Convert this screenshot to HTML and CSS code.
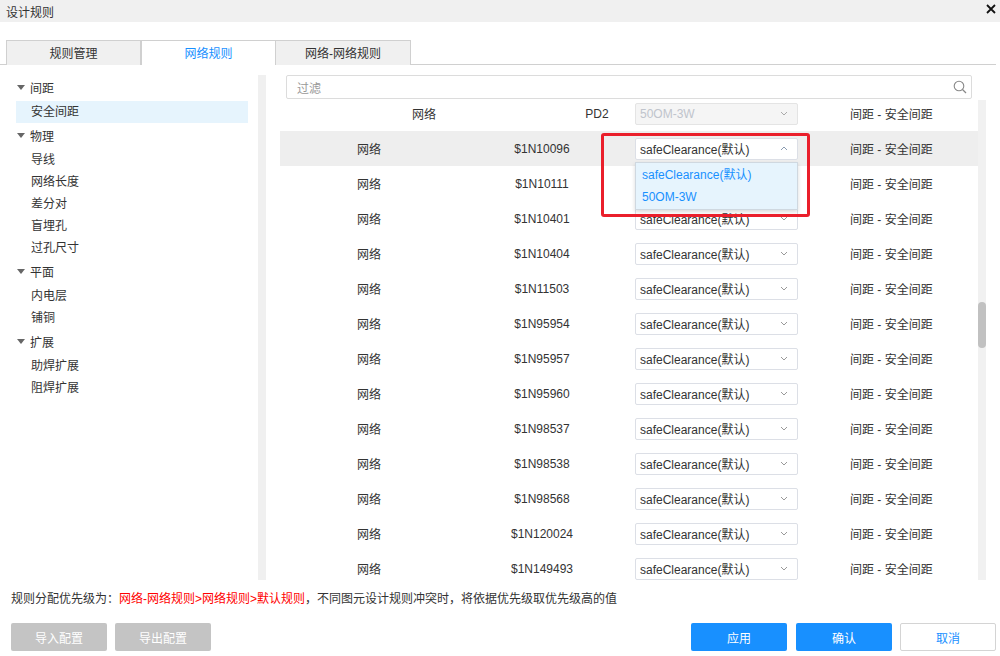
FILE: index.html
```html
<!DOCTYPE html>
<html lang="zh">
<head>
<meta charset="utf-8">
<title>设计规则</title>
<link rel="stylesheet" href="styles.css">
</head>
<body>
<div class="dialog">
  <div class="titlebar">
    <span class="title">设计规则</span>
    <svg class="close" width="10" height="10" viewBox="0 0 10 10"><path d="M1 1 L9 9 M9 1 L1 9" stroke="#111" stroke-width="1.8"/></svg>
  </div>
  <div class="tabs">
    <div class="tab">规则管理</div>
    <div class="tab active">网络规则</div>
    <div class="tab">网络-网络规则</div>
  </div>
  <div class="main">
    <div class="tree">
      <div class="cat"><span class="tri"></span>间距</div>
      <div class="children">
        <div class="item selected">安全间距</div>
      </div>
      <div class="cat"><span class="tri"></span>物理</div>
      <div class="children">
        <div class="item">导线</div>
        <div class="item">网络长度</div>
        <div class="item">差分对</div>
        <div class="item">盲埋孔</div>
        <div class="item">过孔尺寸</div>
      </div>
      <div class="cat"><span class="tri"></span>平面</div>
      <div class="children">
        <div class="item">内电层</div>
        <div class="item">铺铜</div>
      </div>
      <div class="cat"><span class="tri"></span>扩展</div>
      <div class="children">
        <div class="item">助焊扩展</div>
        <div class="item">阻焊扩展</div>
      </div>
    </div>
    <div class="divider"></div>
    <div class="content">
      <div class="filter">
        <span class="placeholder">过滤</span>
        <svg class="search" width="14" height="14" viewBox="0 0 14 14"><circle cx="6" cy="6" r="4.8" fill="none" stroke="#888" stroke-width="1.1"/><path d="M9.5 9.5 L13 13" stroke="#888" stroke-width="1.2"/></svg>
      </div>
      <div class="table-wrap">
        <div class="rows">
          <div class="row row-first">
            <div class="c1">网络</div>
            <div class="c2">PD2</div>
            <div class="c3"><div class="select disabled"><span>50OM-3W</span><svg class="chev" width="8" height="5" viewBox="0 0 8 5"><path d="M1 1 L4 4 L7 1" fill="none" stroke="#aaa" stroke-width="1"/></svg></div></div>
            <div class="c4">间距 - 安全间距</div>
          </div>
          <div class="row hover">
            <div class="c1">网络</div>
            <div class="c2">$1N10096</div>
            <div class="c3 open">
              <div class="select"><span>safeClearance(默认)</span><svg class="chev" width="8" height="5" viewBox="0 0 8 5"><path d="M1 4 L4 1 L7 4" fill="none" stroke="#8a9bb0" stroke-width="1"/></svg></div>
              <div class="dropdown">
                <div class="opt">safeClearance(默认)</div>
                <div class="opt">50OM-3W</div>
              </div>
            </div>
            <div class="c4">间距 - 安全间距</div>
          </div>
          <div class="row"><div class="c1">网络</div><div class="c2">$1N10111</div><div class="c3"><div class="select covered"><span>safeClearance(默认)</span></div></div><div class="c4">间距 - 安全间距</div></div>
          <div class="row"><div class="c1">网络</div><div class="c2">$1N10401</div><div class="c3"><div class="select"><span>safeClearance(默认)</span><svg class="chev" width="8" height="5" viewBox="0 0 8 5"><path d="M1 1 L4 4 L7 1" fill="none" stroke="#999" stroke-width="1"/></svg></div></div><div class="c4">间距 - 安全间距</div></div>
          <div class="row"><div class="c1">网络</div><div class="c2">$1N10404</div><div class="c3"><div class="select"><span>safeClearance(默认)</span><svg class="chev" width="8" height="5" viewBox="0 0 8 5"><path d="M1 1 L4 4 L7 1" fill="none" stroke="#999" stroke-width="1"/></svg></div></div><div class="c4">间距 - 安全间距</div></div>
          <div class="row"><div class="c1">网络</div><div class="c2">$1N11503</div><div class="c3"><div class="select"><span>safeClearance(默认)</span><svg class="chev" width="8" height="5" viewBox="0 0 8 5"><path d="M1 1 L4 4 L7 1" fill="none" stroke="#999" stroke-width="1"/></svg></div></div><div class="c4">间距 - 安全间距</div></div>
          <div class="row"><div class="c1">网络</div><div class="c2">$1N95954</div><div class="c3"><div class="select"><span>safeClearance(默认)</span><svg class="chev" width="8" height="5" viewBox="0 0 8 5"><path d="M1 1 L4 4 L7 1" fill="none" stroke="#999" stroke-width="1"/></svg></div></div><div class="c4">间距 - 安全间距</div></div>
          <div class="row"><div class="c1">网络</div><div class="c2">$1N95957</div><div class="c3"><div class="select"><span>safeClearance(默认)</span><svg class="chev" width="8" height="5" viewBox="0 0 8 5"><path d="M1 1 L4 4 L7 1" fill="none" stroke="#999" stroke-width="1"/></svg></div></div><div class="c4">间距 - 安全间距</div></div>
          <div class="row"><div class="c1">网络</div><div class="c2">$1N95960</div><div class="c3"><div class="select"><span>safeClearance(默认)</span><svg class="chev" width="8" height="5" viewBox="0 0 8 5"><path d="M1 1 L4 4 L7 1" fill="none" stroke="#999" stroke-width="1"/></svg></div></div><div class="c4">间距 - 安全间距</div></div>
          <div class="row"><div class="c1">网络</div><div class="c2">$1N98537</div><div class="c3"><div class="select"><span>safeClearance(默认)</span><svg class="chev" width="8" height="5" viewBox="0 0 8 5"><path d="M1 1 L4 4 L7 1" fill="none" stroke="#999" stroke-width="1"/></svg></div></div><div class="c4">间距 - 安全间距</div></div>
          <div class="row"><div class="c1">网络</div><div class="c2">$1N98538</div><div class="c3"><div class="select"><span>safeClearance(默认)</span><svg class="chev" width="8" height="5" viewBox="0 0 8 5"><path d="M1 1 L4 4 L7 1" fill="none" stroke="#999" stroke-width="1"/></svg></div></div><div class="c4">间距 - 安全间距</div></div>
          <div class="row"><div class="c1">网络</div><div class="c2">$1N98568</div><div class="c3"><div class="select"><span>safeClearance(默认)</span><svg class="chev" width="8" height="5" viewBox="0 0 8 5"><path d="M1 1 L4 4 L7 1" fill="none" stroke="#999" stroke-width="1"/></svg></div></div><div class="c4">间距 - 安全间距</div></div>
          <div class="row"><div class="c1">网络</div><div class="c2">$1N120024</div><div class="c3"><div class="select"><span>safeClearance(默认)</span><svg class="chev" width="8" height="5" viewBox="0 0 8 5"><path d="M1 1 L4 4 L7 1" fill="none" stroke="#999" stroke-width="1"/></svg></div></div><div class="c4">间距 - 安全间距</div></div>
          <div class="row"><div class="c1">网络</div><div class="c2">$1N149493</div><div class="c3"><div class="select"><span>safeClearance(默认)</span><svg class="chev" width="8" height="5" viewBox="0 0 8 5"><path d="M1 1 L4 4 L7 1" fill="none" stroke="#999" stroke-width="1"/></svg></div></div><div class="c4">间距 - 安全间距</div></div>
          <div class="redbox"></div>
        </div>
        <div class="scrollbar"><div class="thumb"></div></div>
      </div>
    </div>
  </div>
  <div class="note">规则分配优先级为：<span class="red">网络-网络规则&gt;网络规则&gt;默认规则</span>，不同图元设计规则冲突时，将依据优先级取优先级高的值</div>
  <div class="footer">
    <div class="btn-group">
      <div class="btn gray">导入配置</div>
      <div class="btn gray">导出配置</div>
    </div>
    <div class="btn-group right">
      <div class="btn blue">应用</div>
      <div class="btn blue">确认</div>
      <div class="btn plain">取消</div>
    </div>
  </div>
</div>
</body>
</html>
```
FILE: styles.css
```css
* { box-sizing: border-box; }
html, body { margin: 0; padding: 0; }
body {
  width: 1000px;
  height: 656px;
  overflow: hidden;
  background: #fff;
  font-family: "Liberation Sans", "Noto Sans CJK SC", sans-serif;
  font-size: 12px;
  color: #333;
}
.dialog { width: 1000px; height: 656px; }

.titlebar {
  height: 22px;
  background: #f0f0f0;
  display: flex;
  align-items: center;
  justify-content: space-between;
  padding: 0 4px 0 6px;
}
.title { color: #333; font-size: 12px; }
.close { margin-top: -4px; }

.tabs {
  margin-top: 18px;
  padding-left: 6px;
  height: 25px;
  display: flex;
  border-bottom: 1px solid #d0d0d0;
  margin-right: 4px;
}
.tab {
  width: 135px;
  height: 25px;
  background: #f0f0f0;
  border: 1px solid #d0d0d0;
  border-bottom: none;
  display: flex;
  align-items: center;
  justify-content: center;
  color: #333;
  padding-bottom: 2px;
}
.tab + .tab { border-left: none; }
.tab.active {
  background: #fff;
  color: #1890ff;
  height: 25px;
  margin-bottom: -1px;
  border-left: 1px solid #d0d0d0;
  border-right: 1px solid #d0d0d0;
}
.tab.active + .tab { border-left: none; }

.main {
  display: flex;
  height: 515px;
}
.tree {
  width: 232px;
  margin-left: 16px;
  padding-top: 11px;
}
.cat {
  height: 22px;
  display: flex;
  align-items: center;
  padding-left: 1px;
}
.tri {
  width: 0;
  height: 0;
  border-left: 4px solid transparent;
  border-right: 4px solid transparent;
  border-top: 5px solid #666;
  margin-right: 5px;
}
.children { margin-top: 3px; margin-bottom: 1px; }
.item {
  height: 22px;
  line-height: 23px;
  padding-left: 15px;
}
.item.selected { background: #e6f4fd; }

.divider {
  width: 8px;
  margin-left: 10px;
  margin-top: 10px;
  background: #f0f0f0;
}

.content {
  width: 706px;
  margin-left: 14px;
  padding-top: 10px;
  display: flex;
  flex-direction: column;
}
.filter {
  height: 24px;
  margin: 0 14px 1px 6px;
  border: 1px solid #dcdcdc;
  border-radius: 2px;
  display: flex;
  align-items: center;
  justify-content: space-between;
  padding: 0 4px 0 10px;
}
.placeholder { color: #999; }

.table-wrap {
  display: flex;
  height: 480px;
}
.rows {
  position: relative;
  width: 698px;
  height: 480px;
  overflow: hidden;
}
.row {
  height: 35px;
  display: grid;
  grid-template-columns: 178px 168px 184px 1fr;
  align-items: center;
}
.row-first {
  margin-top: -4px;
  grid-template-columns: 288px 58px 184px 1fr;
}
.row.hover { background: #eeeeee; }
.c1, .c2 { text-align: center; }
.c3 { position: relative; height: 22px; }
.c4 { padding-left: 40px; }

.select {
  margin-left: 9px;
  width: 163px;
  height: 22px;
  border: 1px solid #dcdfe6;
  border-radius: 2px;
  background: #fff;
  display: flex;
  align-items: center;
  justify-content: space-between;
  padding: 0 9px 0 4px;
  color: #333;
}
.select.disabled { background: #f5f5f5; color: #c0c4cc; border-color: #e4e4e4; }
.select.covered span { visibility: hidden; }

.dropdown {
  position: absolute;
  left: 9px;
  top: 24px;
  width: 163px;
  background: #e6f4fd;
  border: 1px solid #cfd8e0;
  box-shadow: 0 2px 4px rgba(0,0,0,0.15);
  padding: 1px 0;
  z-index: 2;
}
.opt {
  height: 22px;
  line-height: 22px;
  padding-left: 6px;
  color: #1890ff;
}

.redbox {
  position: absolute;
  left: 321px;
  top: 33px;
  width: 209px;
  height: 84px;
  border: 3px solid #ea1f2b;
  border-radius: 3px;
  z-index: 3;
}

.scrollbar {
  width: 8px;
  height: 480px;
  background: #f1f1f1;
  padding-top: 202px;
}
.thumb {
  height: 46px;
  background: #c1c1c1;
  border-radius: 4px;
}

.note {
  margin: 8px 0 0 11px;
  height: 22px;
  line-height: 22px;
  color: #333;
}
.red { color: #ff0000; }

.footer {
  margin-top: 13px;
  display: flex;
  justify-content: space-between;
  padding: 0 4px 0 11px;
}
.btn-group { display: flex; gap: 8px; }
.btn-group.right { gap: 9px; }
.btn-group.right .btn.plain { margin-left: -1px; }
.btn {
  width: 96px;
  height: 28px;
  border-radius: 2px;
  display: flex;
  align-items: center;
  justify-content: center;
  font-size: 12px;
}
.btn.gray { background: #c4c4c4; color: #fff; }
.btn.blue { background: #1890ff; color: #fff; }
.btn.plain { background: #fff; border: 1px solid #d4d4d4; color: #1890ff; }
```
